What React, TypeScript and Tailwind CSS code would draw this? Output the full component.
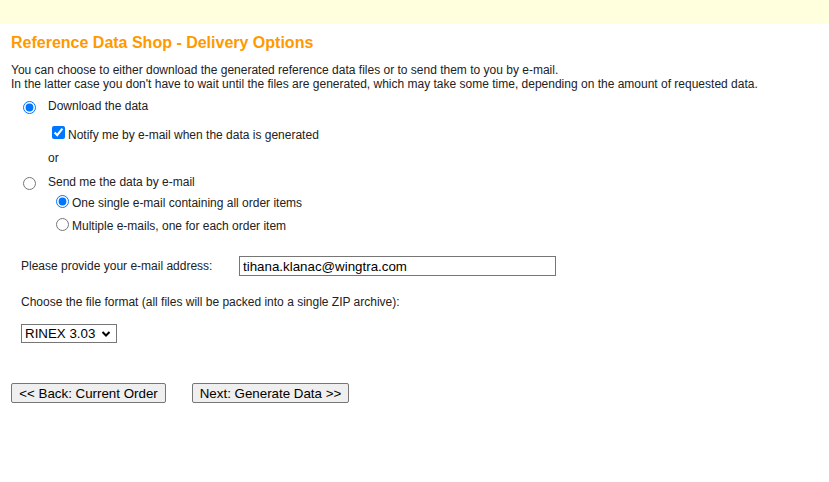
export default function App() {
  return (
    <div className="min-h-screen w-[829px] bg-white text-[12px] leading-[14px] text-[#222]" style={{ fontFamily: '"Liberation Sans", Arial, sans-serif' }}>
      {/* banner */}
      <div className="h-[24px] bg-[#ffffdd]" />

      <div className="pl-[11px]">
        <h1 className="mt-[9px] text-[16px] font-bold leading-[20px] text-[#ff9900]">
          Reference Data Shop - Delivery Options
        </h1>
        <p className="mt-[10px]">
          You can choose to either download the generated reference data files or to send them to you by e-mail.
          <br />
          In the latter case you don't have to wait until the files are generated, which may take some time, depending on the amount of requested data.
        </p>

        {/* download */}
        <div className="mt-[5px] flex h-[22px] items-start">
          <input type="radio" name="mode" defaultChecked className="ml-[12px] mt-[5px] h-[13px] w-[13px]" />
          <span className="ml-[12px] mt-[3px]">Download the data</span>
        </div>
        <div className="flex h-[28px] items-start">
          <input type="checkbox" defaultChecked className="ml-[41px] mt-[8px] h-[13px] w-[13px]" />
          <span className="ml-[3px] mt-[10px]">Notify me by e-mail when the data is generated</span>
        </div>
        <div className="flex h-[22px] items-start">
          <span className="ml-[37px] mt-[5px]">or</span>
        </div>

        {/* e-mail */}
        <div className="flex h-[24px] items-start">
          <input type="radio" name="mode" className="ml-[12px] mt-[9px] h-[13px] w-[13px]" />
          <span className="ml-[12px] mt-[7px]">Send me the data by e-mail</span>
        </div>
        <div className="flex h-[20px] items-start">
          <input type="radio" name="split" defaultChecked className="ml-[45px] mt-[3px] h-[13px] w-[13px]" />
          <span className="ml-[3px] mt-[4px]">One single e-mail containing all order items</span>
        </div>
        <div className="flex h-[23px] items-start">
          <input type="radio" name="split" className="ml-[45px] mt-[6px] h-[13px] w-[13px]" />
          <span className="ml-[3px] mt-[7px]">Multiple e-mails, one for each order item</span>
        </div>

        <div className="mt-[21px] flex h-[20px] items-center pl-[10px]">
          <span className="w-[218px]">Please provide your e-mail address:</span>
          <input
            type="text"
            defaultValue="tihana.klanac@wingtra.com"
            className="h-[20px] w-[317px] border border-[#767676] px-[3px] text-[13.33px] text-black outline-none"
          />
        </div>

        <p className="mt-[19px] pl-[10px]">Choose the file format (all files will be packed into a single ZIP archive):</p>

        <div className="mt-[15px] pl-[10px]">
          <div className="relative flex h-[19px] w-[96px] items-center border border-[#767676] bg-white pl-[3px] text-[13.33px] text-black">
            RINEX 3.03
            <svg className="absolute right-[5px] top-[5px]" width="10" height="8" viewBox="0 0 10 8">
              <path d="M1.5 2 L5 5.5 L8.5 2" fill="none" stroke="#000" strokeWidth="2" />
            </svg>
          </div>
        </div>

        <div className="mt-[40px] flex gap-[26px]">
          <button className="h-[20px] w-[155px] rounded-[2px] border border-[#767676] bg-[#efefef] pt-[1px] text-[13.33px] text-black">
            &lt;&lt; Back: Current Order
          </button>
          <button className="h-[20px] w-[157px] rounded-[2px] border border-[#767676] bg-[#efefef] pt-[1px] text-[13.33px] text-black">
            Next: Generate Data &gt;&gt;
          </button>
        </div>
      </div>
    </div>
  );
}
